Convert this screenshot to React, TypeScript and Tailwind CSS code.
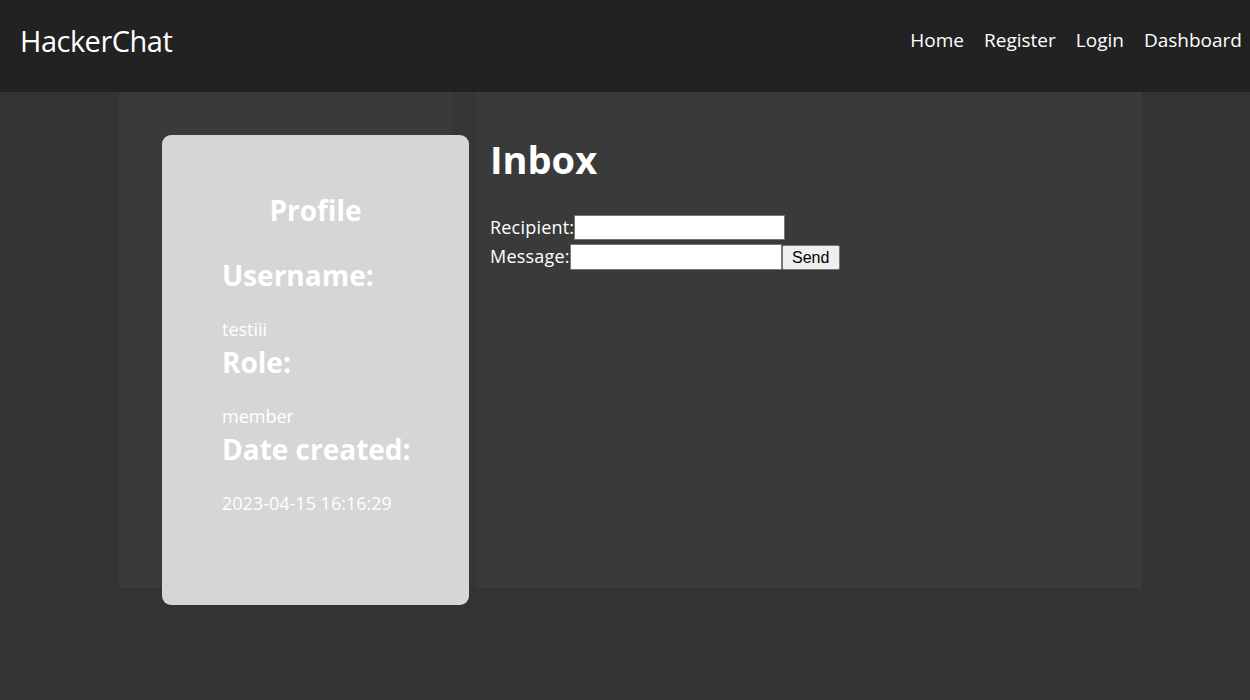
import React from 'react';

const font = { fontFamily: '"Open Sans", "Noto Sans", sans-serif' };

function NavBar() {
  return (
    <nav className="flex h-[92px] items-center justify-between bg-[#222222] pb-[12px] pl-[20px] pr-[8px] text-white">
      <a className="text-[29px] leading-none tracking-[-0.5px]">HackerChat</a>
      <ul className="flex gap-[20px] text-[19px]">
        <li>Home</li>
        <li>Register</li>
        <li>Login</li>
        <li>Dashboard</li>
      </ul>
    </nav>
  );
}

function ProfileCard() {
  return (
    <div className="h-[470px] w-[307px] rounded-[9px] bg-[#d6d6d6] pt-[55px] text-white">
      <h2 className="text-center text-[28px] font-bold leading-[40px]">Profile</h2>
      <div className="pl-[60px]">
        <h3 className="mt-[25px] text-[28px] font-bold leading-[40px]">Username:</h3>
        <p className="mt-[21px] text-[18px] leading-[26px]">testiii</p>
        <h3 className="text-[28px] font-bold leading-[40px]">Role:</h3>
        <p className="mt-[21px] text-[18px] leading-[26px]">member</p>
        <h3 className="text-[28px] font-bold leading-[40px]">Date created:</h3>
        <p className="mt-[21px] text-[18px] leading-[26px]">2023-04-15 16:16:29</p>
      </div>
    </div>
  );
}

function Inbox() {
  return (
    <div className="h-full bg-[#3a3a3a] pl-[13px] pt-[41px] text-white">
      <h1 className="text-[38px] font-bold leading-[52px]">Inbox</h1>
      <form className="mt-[29px] text-[18px] tracking-[0.2px]">
        <div className="flex h-[29px] items-baseline">
          <label>Recipient:</label>
          <input className="h-[25px] w-[211px] border border-[#767676] bg-white" />
        </div>
        <div className="flex h-[29px] items-baseline">
          <label>Message:</label>
          <input className="h-[26px] w-[212px] border border-[#767676] bg-white" />
          <button
            type="button"
            className="h-[25px] w-[58px] rounded-[2px] border border-[#767676] bg-[#efefef] text-[16px] tracking-normal text-black"
            style={{ fontFamily: '"Liberation Sans", Arial, sans-serif' }}
          >
            Send
          </button>
        </div>
      </form>
    </div>
  );
}

export default function App() {
  return (
    <div className="min-h-[700px] bg-[#333333]" style={font}>
      <NavBar />
      <main className="ml-[119px] flex h-[496px] w-[1023px] bg-[#363636]">
        <section className="w-[333px] bg-[#3a3a3a] pl-[43px] pt-[43px]">
          <ProfileCard />
        </section>
        <section className="ml-[25px] w-[665px]">
          <Inbox />
        </section>
      </main>
    </div>
  );
}
